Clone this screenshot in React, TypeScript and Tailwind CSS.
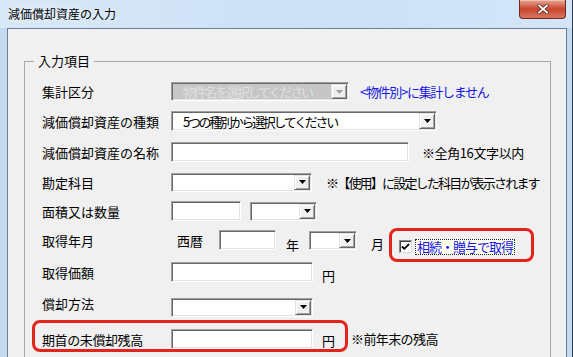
import React from 'react'

type BoxProps = { className?: string; children?: React.ReactNode }

// classic sunken edit box
function Edit({ className = '' }: BoxProps) {
  return (
    <div
      className={`h-[20px] bg-white border border-t-[#a0a0a0] border-l-[#a0a0a0] border-b-white border-r-white shadow-[inset_1px_1px_0_#696969,inset_-1px_-1px_0_#e3e3e3] ${className}`}
    />
  )
}

function Combo({
  className = '',
  text,
  textClass = '',
  disabled = false,
}: {
  className?: string
  text?: string
  textClass?: string
  disabled?: boolean
}) {
  return (
    <div
      className={`h-[19px] p-[1px] flex border border-t-[#a0a0a0] border-l-[#a0a0a0] border-b-white border-r-white shadow-[inset_1px_1px_0_#696969,inset_-1px_-1px_0_#e3e3e3] ${
        disabled ? 'bg-[#c6c6c6]' : 'bg-white'
      } ${className}`}
    >
      <div
        className={`flex-1 min-w-0 flex items-center pl-[10px] whitespace-nowrap ${
          disabled ? 'text-[#e0e0e0]' : 'text-black'
        } ${textClass}`}
      >
        {text}
      </div>
      <div className="w-[16px] shrink-0 h-full bg-[#f0f0f0] border border-t-[#e3e3e3] border-l-[#e3e3e3] border-b-[#696969] border-r-[#696969] shadow-[inset_1px_1px_0_#fff,inset_-1px_-1px_0_#a0a0a0] flex items-center justify-center">
        <svg width="7" height="4" viewBox="0 0 7 4">
          <path d="M0 0h7L3.5 4z" fill={disabled ? '#a0a0a0' : '#000'} />
        </svg>
      </div>
    </div>
  )
}

function Label({ children, className = '' }: BoxProps) {
  return <div className={`w-[129px] shrink-0 whitespace-nowrap ${className}`}>{children}</div>
}

export default function App() {
  return (
    <div className="w-[573px] h-[357px] overflow-hidden flex flex-col bg-[#c4daf1] border-r border-r-[#2b3b4e] text-[13px] leading-none text-black font-['Noto_Sans_CJK_JP','Noto_Sans_CJK_SC',sans-serif]">
      {/* Title bar */}
      <div className="h-[28px] shrink-0 flex items-start justify-between bg-linear-to-r from-[#d8e8f8] via-[#cde0f4] to-[#d3e5f7]">
        <div className="pl-[8px] pt-[8px] text-[12px] [text-shadow:0_0_6px_#fff]">減価償却資産の入力</div>
        <div className="w-[47px] h-[19px] mr-[6px] rounded-b-[4px] border border-t-0 border-[#6a2a1f] bg-linear-to-b from-[#e6a593] via-[#c9442f] to-[#d8745c] shadow-[inset_0_1px_0_#f0c0b0] flex items-center justify-center">
          <svg width="12" height="10" viewBox="0 0 12 10">
            <path d="M2 1.5l8 7M10 1.5l-8 7" stroke="#5a2a22" strokeWidth="3.4" strokeLinecap="square" />
            <path d="M2 1.5l8 7M10 1.5l-8 7" stroke="#fff" strokeWidth="1.8" strokeLinecap="square" />
          </svg>
        </div>
      </div>

      {/* Frame + client */}
      <div className="flex-1 flex pl-[7px] pr-[5px] min-h-0">
        <div className="flex-1 bg-[#f0f0f0] border border-b-0 border-[#6d8196] overflow-hidden">
          <fieldset className="mt-[24px] ml-[16px] mr-[15px] h-[340px] border border-[#a8a8a8] p-0">
            <legend className="ml-[9px] px-[4px] leading-[16px]">入力項目</legend>

            {/* 集計区分 */}
            <div className="mt-[13px] pl-[17px] h-[19px] flex items-center">
              <Label>集計区分</Label>
              <Combo disabled className="w-[178px]" textClass="pl-[9px] tracking-[-2.2px]" text="物件名を選択してください" />
              <div className="ml-[11px] text-[#1515e6] whitespace-nowrap tracking-[-1.3px]">&lt;物件別&gt;に集計しません</div>
            </div>

            {/* 種類 */}
            <div className="mt-[10px] pl-[17px] h-[20px] flex items-center">
              <Label>減価償却資産の種類</Label>
              <Combo className="w-[266px] h-[20px]" textClass="tracking-[-2.3px]" text="5つの種別から選択してください" />
            </div>

            {/* 名称 */}
            <div className="mt-[11px] pl-[17px] h-[20px] flex items-center">
              <Label>減価償却資産の名称</Label>
              <Edit className="w-[238px]" />
              <div className="ml-[13px] whitespace-nowrap tracking-[-0.4px]">※全角16文字以内</div>
            </div>

            {/* 勘定科目 */}
            <div className="mt-[10px] pl-[17px] h-[20px] flex items-center">
              <Label>勘定科目</Label>
              <Combo className="w-[141px]" />
              <div className="ml-[14px] whitespace-nowrap tracking-[-1.8px]">※【使用】に設定した科目が表示されます</div>
            </div>

            {/* 面積又は数量 */}
            <div className="mt-[9px] pl-[17px] h-[20px] flex items-center">
              <Label>面積又は数量</Label>
              <Edit className="w-[70px]" />
              <Combo className="ml-[9px] w-[67px]" />
            </div>

            {/* 取得年月 */}
            <div className="mt-[9px] pl-[17px] h-[20px] flex items-start">
              <div className="w-[129px] shrink-0 h-[20px] flex items-center">取得年月</div>
              <div className="ml-[6px] h-[20px] flex items-center">西暦</div>
              <Edit className="ml-[16px] w-[57px]" />
              <div className="ml-[10px] h-[20px] mt-[4px] flex items-center">年</div>
              <Combo className="ml-[10px] mt-[1px] w-[48px]" />
              <div className="ml-[14px] h-[20px] mt-[3px] flex items-center">月</div>
              <div className="ml-[5px] -mt-[2px] h-[34px] border-[3px] border-[#e5221b] rounded-[8px] pl-[7px] pr-[16px] flex items-center">
                <div className="w-[13px] h-[13px] mt-[3px] bg-white border border-t-[#8a8a8a] border-l-[#8a8a8a] border-b-[#d8d8d8] border-r-[#d8d8d8] shadow-[inset_1px_1px_0_#404040] flex items-center justify-center">
                  <svg width="9" height="9" viewBox="0 0 9 9">
                    <path d="M1 4.5l2.3 2.3L8 2" stroke="#000" strokeWidth="1.8" fill="none" />
                  </svg>
                </div>
                <div className="ml-[3px] mt-[3px] px-[1px] h-[16px] flex items-center border border-dotted border-[#202020] bg-[#fffff0] text-[#1515e6] whitespace-nowrap tracking-[-1px]">
                  相続・贈与で取得
                </div>
              </div>
            </div>

            {/* 取得価額 */}
            <div className="mt-[12px] pl-[17px] h-[20px] flex items-center">
              <Label>取得価額</Label>
              <Edit className="w-[142px]" />
              <div className="ml-[9px] mt-[6px]">円</div>
            </div>

            {/* 償却方法 */}
            <div className="mt-[15px] pl-[17px] h-[20px] flex items-center">
              <Label className="-mt-[7px]">償却方法</Label>
              <Combo className="w-[142px]" />
            </div>

            {/* 期首の未償却残高 */}
            <div className="mt-[3px] pl-[7px] flex items-start">
              <div className="h-[32px] border-[3px] border-[#e5221b] rounded-[8px] pt-[6px] pl-[7px] pr-[10px] flex items-center">
                <Label className="tracking-[-0.4px]">期首の未償却残高</Label>
                <Edit className="w-[142px]" />
                <div className="ml-[9px] mt-[3px]">円</div>
              </div>
              <div className="ml-[3px] mt-[12px] whitespace-nowrap tracking-[-0.6px]">※前年末の残高</div>
            </div>
          </fieldset>
        </div>
      </div>
    </div>
  )
}
